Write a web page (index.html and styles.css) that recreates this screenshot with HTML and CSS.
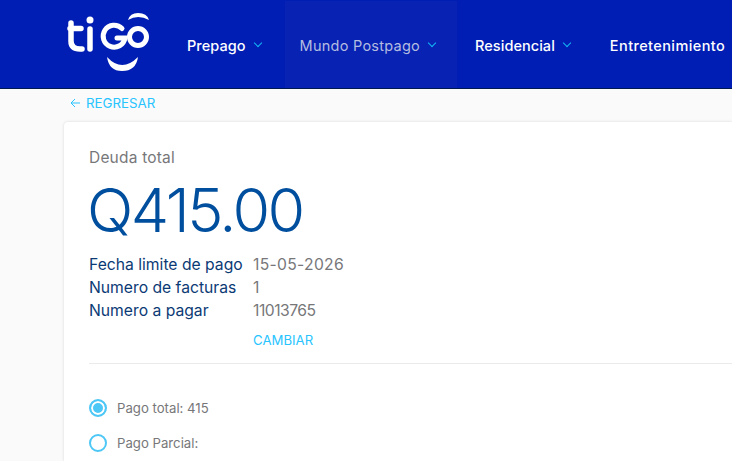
FILE: index.html
```html
<!DOCTYPE html>
<html lang="es">
<head>
  <meta charset="UTF-8" />
  <title>Tigo - Pagos</title>
  <link rel="stylesheet" href="styles.css">
</head>
<body>
  <header class="topbar">
    <a class="logo" href="#" aria-label="Tigo">
      <svg width="100" height="68" viewBox="0 0 100 68" fill="none" stroke="#fff" stroke-linecap="round">
        <path d="M11 15V33q0 8 9 8h2M10 20.500H21" stroke-width="5.500"/>
        <path d="M30 21V41" stroke-width="5.500"/>
        <circle cx="30" cy="12" r="3.500" fill="#fff" stroke="none"/>
        <path d="M62 20.500A11 11 0 1 0 65 30H57" stroke-width="5"/>
        <circle cx="78" cy="29" r="8.500" stroke-width="5"/>
        <path d="M68 12Q70 5 78 5Q87 5 89 12Q78 6 68 12Z" fill="#fff" stroke="none"/>
        <path d="M47 49Q62 65 78 49Q76 63 62 63Q49 63 47 49Z" fill="#fff" stroke="none"/>
      </svg>
    </a>
    <nav class="nav">
      <a class="nav-item" href="#">Prepago <span class="caret"></span></a>
      <a class="nav-item active" href="#">Mundo Postpago <span class="caret"></span></a>
      <a class="nav-item" href="#">Residencial <span class="caret"></span></a>
      <a class="nav-item" href="#">Entretenimiento</a>
    </nav>
  </header>

  <main class="content">
    <a class="back" href="#">
      <svg width="10" height="10" viewBox="0 0 10 10" fill="none" stroke="#28c4ff" stroke-width="1">
        <path d="M5 1L1 5l4 4M1 5h9"/>
      </svg>
      REGRESAR
    </a>

    <section class="card">
      <p class="debt-label">Deuda total</p>
      <p class="debt-amount">Q415.00</p>

      <dl class="details">
        <dt>Fecha limite de pago</dt>
        <dd class="date">15-05-2026</dd>
        <dt>Numero de facturas</dt>
        <dd>1</dd>
        <dt>Numero a pagar</dt>
        <dd class="number">11013765</dd>
      </dl>
      <a class="change" href="#">CAMBIAR</a>

      <hr class="divider">

      <div class="options">
        <label class="option"><span class="radio checked"></span>Pago total: 415</label>
        <label class="option"><span class="radio"></span>Pago Parcial:</label>
      </div>
    </section>
  </main>
</body>
</html>
```

FILE: styles.css
```css
html, body {
  height: 461px;
  overflow: hidden;
}

body {
  margin: 0;
  font-family: Inter, "Open Sans", sans-serif;
  background: #fafafa;
}

.topbar {
  display: flex;
  height: 88px;
  background: #001eb4;
  border-bottom: 1px solid #001a4d;
  overflow: hidden;
}

.logo {
  display: block;
  width: 168px;
  padding: 8px 0 0 60px;
  box-sizing: border-box;
  flex: none;
}

.nav {
  display: flex;
  white-space: nowrap;
}

.nav-item {
  display: flex;
  align-items: center;
  gap: 8px;
  margin-top: 1px;
  padding: 1px 19px 0;
  color: #fff;
  font-size: 14.500px;
  font-weight: 500;
  letter-spacing: 0.05px;
  text-decoration: none;
}

.nav-item:last-child {
  padding-left: 20px;
  letter-spacing: 0.4px;
}

.nav-item.active {
  margin: 1px -1px 0 4px;
  padding-left: 15px;
  padding-right: 21px;
  color: #b4bce0;
  font-weight: 400;
  letter-spacing: 0.25px;
  background: #0823b4;
}

.caret {
  width: 6px;
  height: 6px;
  margin: -5px 1px 0;
  box-sizing: border-box;
  border-right: 1.500px solid #14b8f5;
  border-bottom: 1.500px solid #14b8f5;
  transform: rotate(45deg);
}

.content {
  padding: 5px 0 0 64px;
}

.back {
  display: flex;
  align-items: center;
  gap: 6px;
  margin-left: 6px;
  height: 18px;
  color: #28c4ff;
  font-size: 13.300px;
  text-decoration: none;
}

.card {
  box-sizing: border-box;
  margin-top: 10px;
  padding: 27px 0 0 25px;
  height: 339px;
  background: #fff;
  border-radius: 4px 0 0 0;
  box-shadow: 0 0 3px rgba(0, 0, 0, 0.14);
}

.debt-label {
  margin: 0;
  color: #77777a;
  font-size: 15.500px;
  letter-spacing: 0.2px;
  line-height: 18px;
}

.debt-amount {
  margin: 8px 0 0 -2px;
  color: #004f9e;
  font-size: 61px;
  font-weight: 300;
  line-height: 70px;
  letter-spacing: -2.500px;
}

.details {
  display: grid;
  grid-template-columns: 164px 1fr;
  grid-auto-rows: 23px;
  margin: 8px 0 0;
  font-size: 15.700px;
  line-height: 23px;
}

.details dt {
  color: #0b3a75;
}

.details dd {
  margin: 0;
  color: #77777a;
}

.details .date {
  letter-spacing: 0.3px;
}

.details .number {
  letter-spacing: -0.5px;
}

.change {
  display: block;
  margin: 10px 0 0 164px;
  color: #28c4ff;
  font-size: 13.200px;
  line-height: 16px;
  text-decoration: none;
}

.divider {
  height: 1px;
  margin: 15px 0 0;
  background: #ebebeb;
  border: none;
}

.options {
  display: flex;
  flex-direction: column;
  gap: 17px;
  margin-top: 35px;
}

.option {
  display: flex;
  align-items: center;
  gap: 10px;
  color: #77777a;
  font-size: 13.200px;
  line-height: 18px;
}

.radio {
  width: 14px;
  height: 14px;
  border: 2px solid #4dc7f5;
  border-radius: 50%;
  box-sizing: content-box;
}

.radio.checked {
  background: #4dc7f5;
  box-shadow: inset 0 0 0 2px #fff;
}
```
